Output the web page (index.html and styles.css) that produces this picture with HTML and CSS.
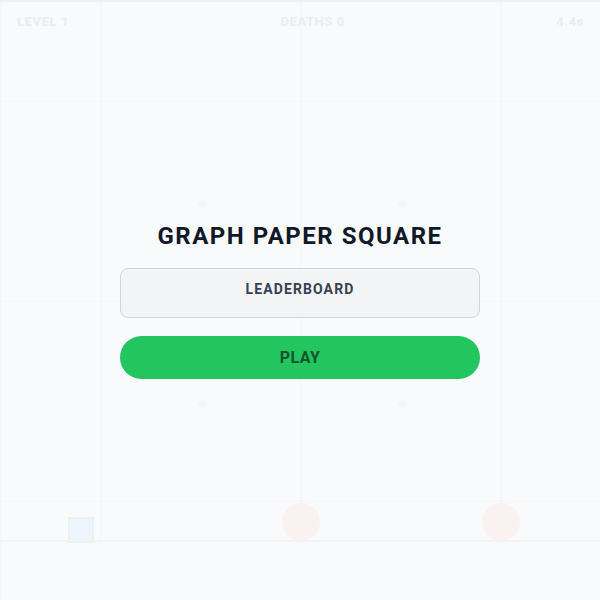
FILE: index.html
```html
<!DOCTYPE html>
<html>
<head>
<meta charset="utf-8">
<link rel="stylesheet" href="styles.css">
</head>
<body>
<div class="stage">
  <div class="game">
    <div class="hud">
      <span class="hud-item">LEVEL 1</span>
      <span class="hud-item">DEATHS 0</span>
      <span class="hud-item">4.4s</span>
    </div>
    <div class="field"></div>
    <div class="ground"></div>
    <div class="player"></div>
    <div class="enemy enemy-a"></div>
    <div class="enemy enemy-b"></div>
    <div class="spike s1"></div>
    <div class="spike s2"></div>
    <div class="spike s3"></div>
    <div class="spike s4"></div>
  </div>
  <div class="overlay">
    <h1 class="title">GRAPH PAPER SQUARE</h1>
    <button class="btn btn-board">LEADERBOARD</button>
    <button class="btn btn-play">PLAY</button>
  </div>
</div>
</body>
</html>
```
FILE: styles.css
```css
* { box-sizing: border-box; }
html, body { margin: 0; padding: 0; }
body {
  width: 600px;
  height: 600px;
  overflow: hidden;
  font-family: Roboto, "Liberation Sans", sans-serif;
  background: #f8fafc;
}
.stage {
  position: relative;
  width: 600px;
  height: 600px;
}
.game {
  position: absolute;
  inset: 0;
  display: flex;
  flex-direction: column;
  border-top: 2px solid #eef0f3;
  border-left: 1px solid #f4f6f9;
  background-color: #f8fafc;
  background-image:
    linear-gradient(to right, rgba(15, 23, 42, 0.012) 2px, transparent 2px),
    linear-gradient(to bottom, rgba(15, 23, 42, 0.008) 2px, transparent 2px);
  background-size: 200px 200px;
  background-position: 99px 98px;
}
.hud {
  display: flex;
  justify-content: space-between;
  align-items: center;
  padding: 8px 16px 0 16px;
  height: 30px;
  font-size: 13px;
  font-weight: 700;
  letter-spacing: 0.6px;
  color: #eaecf0;
}
.field { flex: 1; }
.ground {
  height: 60px;
  border-top: 2px solid #f0f2f5;
  background: #f8fafc;
}
.player {
  position: absolute;
  left: 67px;
  top: 515px;
  width: 26px;
  height: 26px;
  background: #edf5fc;
  border: 2px solid #eaf2ef;
}
.enemy {
  position: absolute;
  top: 501px;
  width: 38px;
  height: 38px;
  border-radius: 50%;
  background: #faf2f1;
}
.enemy-a { left: 281px; }
.enemy-b { left: 481px; }
.spike {
  position: absolute;
  width: 7px;
  height: 7px;
  transform: rotate(45deg);
  background: #f4f6f8;
}
.s1 { left: 198px; top: 198px; }
.s2 { left: 398px; top: 198px; }
.s3 { left: 198px; top: 398px; }
.s4 { left: 398px; top: 398px; }
.overlay {
  position: absolute;
  inset: 0;
  display: flex;
  flex-direction: column;
  align-items: center;
  justify-content: center;
  padding-bottom: 2px;
}
.title {
  margin: 0 0 16px 0;
  font-size: 24px;
  line-height: 32px;
  font-weight: 700;
  letter-spacing: 1.5px;
  color: #111827;
}
.btn {
  width: 360px;
  font-family: Roboto, "Liberation Sans", sans-serif;
  font-weight: 700;
  cursor: pointer;
}
.btn-board {
  height: 50px;
  padding: 0 0 8px 0;
  background: #f3f4f6;
  border: 1px solid #d1d5db;
  border-radius: 8px;
  font-size: 14px;
  letter-spacing: 1.1px;
  color: #374151;
  margin-bottom: 18px;
}
.btn-play {
  height: 43px;
  background: #22c55e;
  border: none;
  border-radius: 22px;
  font-size: 16px;
  letter-spacing: 0.5px;
  color: #14532d;
}
```
